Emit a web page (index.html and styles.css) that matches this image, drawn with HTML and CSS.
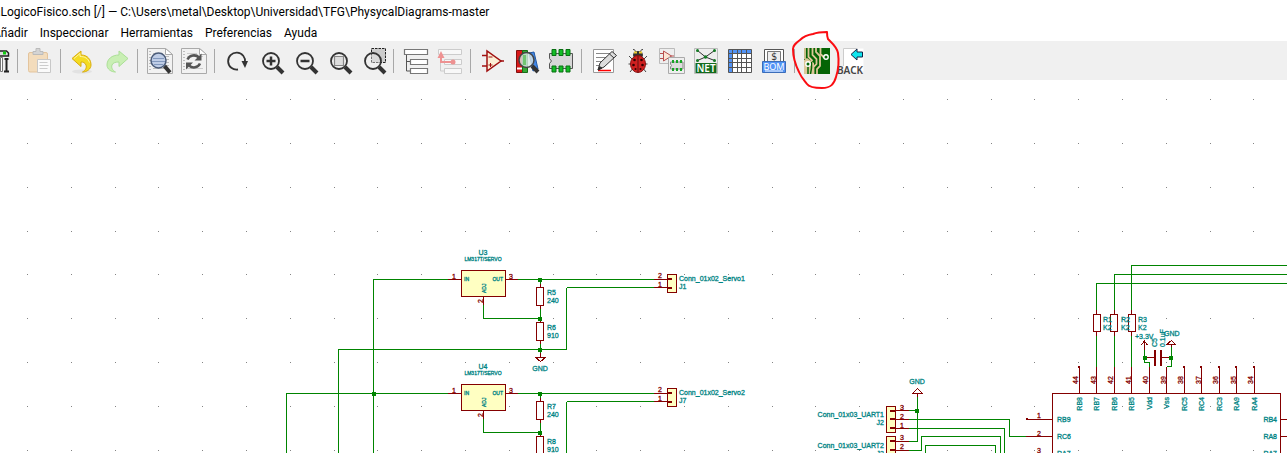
FILE: index.html
```html
<!DOCTYPE html>
<html lang="es">
<head>
<meta charset="utf-8">
<title>LogicoFisico.sch</title>
<link rel="stylesheet" href="styles.css">
</head>
<body>
<header class="titlebar">aLogicoFisico.sch [/] — C:\Users\metal\Desktop\Universidad\TFG\PhysycalDiagrams-master</header>
<nav class="menubar">
  <button class="menu">Añadir</button>
  <button class="menu">Inspeccionar</button>
  <button class="menu">Herramientas</button>
  <button class="menu">Preferencias</button>
  <button class="menu">Ayuda</button>
</nav>
<div class="toolbar" role="toolbar">
  <button class="tool" aria-label="Configurar"><svg class="icon" viewBox="0 0 26 26"><path d="M10 3h13.500l2 2v3H10z" fill="#ddd" stroke="#222" stroke-width="1.500"/><path d="M20 3.500h3v3h-3z" fill="#1c1"/><path d="M17.500 9.500h2v14h-2z" fill="#fff" stroke="#777"/><path d="M23.500 10v13M21.500 11h4M21 23.500h5" fill="none" stroke="#222" stroke-width="2"/></svg></button>
  <span class="sep"></span>
  <button class="tool" aria-label="Pegar"><svg class="icon" viewBox="0 0 26 26"><rect x="2.500" y="4.500" width="19" height="19.500" rx="1.500" fill="#f3dcbc" stroke="#e3c49d"/><path d="M7 6.500V3.500h3V.5h4v3h3v3z" fill="#d4d4d4" stroke="#bbb"/><path d="M11.500 11.500h13v13h-13z" fill="#fafafa" stroke="#c8c8c8"/><path d="M13.500 14.500h8M13.500 17.500h9M13.500 20.500h8" stroke="#ccc"/></svg></button>
  <span class="sep"></span>
  <button class="tool" aria-label="Deshacer"><svg class="icon" viewBox="0 0 26 26"><ellipse cx="13" cy="23.500" rx="10" ry="2" fill="#e2e2e2"/><path d="M3 10.500 12 3v4c7 0 10 5 10 10 0 4-4 7-8.500 7 3-1.500 4.500-4.500 3.500-7-1-2.500-3-3-5-3v4.500z" fill="#f4dc22" stroke="#d9ac10"/><path d="m5 10.500 6-5v3c5 0 8 2 9.500 6" fill="none" stroke="#fff3a0"/></svg></button>
  <button class="tool" aria-label="Rehacer"><svg class="icon" viewBox="0 0 26 26"><path d="M25 10.500 16 3v4C9 7 4 11 4 17c0 4 4 7 8.500 7-3-1.500-4.500-4.500-3.500-7 1-2.500 4-3 7-3v4.500z" fill="#c9efb4" stroke="#abdf96"/></svg></button>
  <span class="sep"></span>
  <button class="tool" aria-label="Vista previa"><svg class="icon" viewBox="0 0 26 26"><path d="M1.500.5h18l7 6v19h-25z" fill="#f2f2f2" stroke="#aaa"/><path d="M19.500.5v6h7z" fill="#fff" stroke="#aaa"/><path d="M4 3v21" stroke="#888" stroke-dasharray="1 2"/><path d="M7 5.500h10M7 8.500h16M7 11.500h16M7 14.500h16M7 17.500h16M7 20.500h16" stroke="#bbb"/><path d="m18.500 18 5.500 6.500" stroke="#333" stroke-width="4"/><circle cx="12.500" cy="12.500" r="7.500" fill="#bfcde6" stroke="#4a5b78" stroke-width="1.500"/><path d="M7 10.500h11M6 13.500h13M8 16.500h9" stroke="#8298bd"/></svg></button>
  <button class="tool" aria-label="Actualizar"><svg class="icon" viewBox="0 0 26 26"><path d="M1.500.5h18l7 6v19h-25z" fill="#f2f2f2" stroke="#aaa"/><path d="M19.500.5v6h7z" fill="#fff" stroke="#aaa"/><path d="M4 3v21" stroke="#888" stroke-dasharray="1 2"/><path d="M7 5.500h10M7 8.500h16M7 20.500h16" stroke="#ccc"/><path d="M7.500 11.500C9.500 7 15.500 6 19 9.500M20 15.500C18 20 12.500 20.500 9 17.500" fill="none" stroke="#555" stroke-width="2.500"/><path d="M21.500 5.500v7h-7zM6 21.500v-7h7z" fill="#555"/></svg></button>
  <span class="sep"></span>
  <button class="tool" aria-label="Redibujar"><svg class="icon" viewBox="0 0 26 26"><path d="M15 21.500a8.500 8.500 0 1 1 7-7" fill="none" stroke="#333" stroke-width="1.800"/><path d="M18.500 13H25l-3 7z" fill="#333"/></svg></button>
  <button class="tool" aria-label="Acercar"><svg class="icon" viewBox="0 0 26 26"><circle cx="14" cy="13" r="8" class="lens"/><path d="m20 19 6 6" class="grip"/><path d="M9.500 13h9M14 8.500v9" stroke="#333" stroke-width="2.500"/></svg></button>
  <button class="tool" aria-label="Alejar"><svg class="icon" viewBox="0 0 26 26"><circle cx="14" cy="13" r="8" class="lens"/><path d="m20 19 6 6" class="grip"/><path d="M9.500 13h9" stroke="#333" stroke-width="2.500"/></svg></button>
  <button class="tool" aria-label="Ajustar"><svg class="icon" viewBox="0 0 26 26"><circle cx="14" cy="13" r="8" class="lens"/><path d="m20 19 6 6" class="grip"/><path d="M9.500 8.500h9v9h-9z" fill="#ddd" stroke="#888" stroke-width="1.200"/></svg></button>
  <button class="tool" aria-label="Zoom a selección"><svg class="icon" viewBox="0 0 26 26"><path d="M12.500.5h14v14h-14z" fill="#ccc" stroke="#222" stroke-dasharray="2.500 1"/><circle cx="14" cy="13" r="8" class="lens"/><path d="m20 19 6 6" class="grip"/></svg></button>
  <span class="sep"></span>
  <button class="tool" aria-label="Jerarquía"><svg class="icon" viewBox="0 0 26 26"><path d="M4.500 7v16H9M4.500 13.500H9" fill="none" stroke="#555"/><path d="M2.500 1.500h23v5h-23zM8.500 11.500h17v5h-17zM8.500 20.500h17v5h-17z" fill="#fff" stroke="#777" stroke-width="1.200"/></svg></button>
  <button class="tool" aria-label="Salir de la hoja"><svg class="icon" viewBox="0 0 26 26"><path d="M4.500 7v16H9" fill="none" stroke="#ccc"/><path d="M2.500 1.500h23v5h-23zM8.500 11.500h17v5h-17zM8.500 20.500h17v5h-17z" fill="#f8f8f8" stroke="#ccc"/><path d="M17 14H5V8" fill="none" stroke="#ee9292" stroke-width="2"/><path d="m5 3 3.500 7h-7z" fill="#ee9292"/><circle cx="17" cy="14" r="2.500" fill="#ee9292"/></svg></button>
  <span class="sep"></span>
  <button class="tool" aria-label="Editor de símbolos"><svg class="icon" viewBox="0 0 26 26"><path d="M3 7.500h5M3 18h5M22 13h3" stroke="#a01010" stroke-width="1.500"/><path d="M8 3v20l14-10z" fill="#fbeed5" stroke="#a01010" stroke-width="1.500"/><path d="M9.500 9h4M9.500 17h4M11.500 15v4" stroke="#a01010"/></svg></button>
  <button class="tool" aria-label="Bibliotecas"><svg class="icon" viewBox="0 0 26 26"><path d="M3.500 2.500h6v22h-6z" fill="#d81818" stroke="#801010"/><path d="M4 20.500h5" stroke="#fff" stroke-width="2"/><path d="M9.500 2.500h5v22h-5z" fill="#35a835" stroke="#176d17"/><path d="m16 5 5-1 4 17-5 2z" fill="#4187e6" stroke="#2058a5"/><circle cx="13.500" cy="12" r="7.500" fill="#dce9e8" fill-opacity=".8" stroke="#444" stroke-width="1.500"/><path d="M11.500 7v10" stroke="#72c572" stroke-width="3"/><path d="m19 18 6 6" class="grip"/></svg></button>
  <button class="tool" aria-label="Editor de huellas"><svg class="icon" viewBox="0 0 26 26"><path d="M2.500 5.500h23v15h-23v-5l2-2.500-2-2.500z" fill="#d7d7d7" stroke="#555"/><path d="M5 1.500h4v6H5zM12 1.500h4v6h-4zM19 1.500h4v6h-4zM5 18h4v6H5zM12 18h4v6h-4zM19 18h4v6h-4z" fill="#12bd25" stroke="#086f12"/></svg></button>
  <span class="sep"></span>
  <button class="tool" aria-label="Anotar"><svg class="icon" viewBox="0 0 26 26"><path d="M3.500 1.500h20v23h-20z" fill="#fff" stroke="#999"/><path d="M6 5.500h15M6 9.500h12M6 13.500h9M6 17.500h5" stroke="#888"/><path d="M8 22.500h13" stroke="#f00" stroke-width="1.500"/><path d="m8 22 2-7L22 3.500l4.500 4L14 19z" fill="#ddd" stroke="#333"/><path d="m8 22 1.500-3.500L12 20zM19.500 6l4.500 4" fill="#222" stroke="#333"/></svg></button>
  <button class="tool" aria-label="Comprobar reglas"><svg class="icon" viewBox="0 0 26 26"><path d="M9 1.500c2 0 2.500 1 2.500 3M19 1.500c-2 0-2.500 1-2.500 3M5 8l4 4M23 8l-4 4M4.500 16h19M6 24l4-5M22 24l-4-5" fill="none" stroke="#444"/><ellipse cx="14" cy="7" rx="5" ry="4" fill="#333"/><path d="M10 4.500h3M15 4.500h3" stroke="#eecb35" stroke-width="2"/><ellipse cx="14" cy="16" rx="7.500" ry="8.500" fill="#d02020" stroke="#811"/><path d="M14 8v16.500" stroke="#611"/><g fill="#300"><circle cx="10.500" cy="12" r="1.300"/><circle cx="17.500" cy="12" r="1.300"/><circle cx="9.500" cy="17" r="1.300"/><circle cx="18.500" cy="17" r="1.300"/><circle cx="11.500" cy="21" r="1"/><circle cx="16.500" cy="21" r="1"/></g></svg></button>
  <button class="tool" aria-label="Asignar huellas"><svg class="icon" viewBox="0 0 26 26"><path d="M1.500.5h15v15h-15z" fill="#eee" stroke="#bbb"/><path d="M5.500 3v10l8-5zM2 5.500h3M2 10.500h3M13 8h3" fill="#fbe5d5" stroke="#b85050"/><path d="M10.500 9.500h16v16h-16z" fill="#eee" stroke="#aaa"/><path d="M12.500 14h12.500v7H12.500v-2l1-1.500-1-1.500z" fill="#ddd" stroke="#888"/><path d="M14 12h2v3h-2zM18 12h2v3h-2zM22 12h2v3h-2zM14 20h2v3h-2zM18 20h2v3h-2zM22 20h2v3h-2z" fill="#18a326"/></svg></button>
  <button class="tool" aria-label="Generar netlist"><svg class="icon" viewBox="0 0 26 26"><path d="M2.500.5h23v25h-23z" fill="#eee" stroke="#bbb"/><path d="m5.500 2.500 8 6.500 9-6.500M5.500 12.500l8-3.500 9 3.500" fill="none" stroke="#333"/><g fill="#147a24"><circle cx="5.500" cy="2.500" r="1.500"/><circle cx="22.500" cy="2.500" r="1.500"/><circle cx="13.500" cy="9" r="1.800"/><circle cx="5.500" cy="12.500" r="1.500"/><circle cx="22.500" cy="12.500" r="1.500"/></g><path d="M3.500 15h21v10h-21z" fill="#116b1c"/><text x="14" y="23.500" class="net-label">NET</text></svg></button>
  <button class="tool" aria-label="Tabla de campos"><svg class="icon" viewBox="0 0 26 26"><path d="M2.500 1.500h23v23h-23z" fill="#fff"/><path d="M2.500 1.500h23v4h-23zM2.500 1.500h4v23h-4z" fill="#5293f5"/><path d="M2.500 1.500h23v23h-23zM6.500 1.500v23M11.500 1.500v23M15.500 1.500v23M20.500 1.500v23M2.500 5.500h23M2.500 10.500h23M2.500 14.500h23M2.500 19.500h23" fill="none" stroke="#555"/></svg></button>
  <button class="tool" aria-label="Lista de materiales"><svg class="icon" viewBox="0 0 26 26"><path d="M4.500 1.500h19v13h-19z" fill="#fff" stroke="#555"/><path d="M7.500 3.500h13v10h-13z" fill="#eee" stroke="#777"/><text x="14" y="12" class="dollar">$</text><path d="M2.500 13.500h23v11h-23z" fill="#5293f5" stroke="#3b6db9"/><text x="14" y="22" class="bom-label">BOM</text><path d="M5 23h18" stroke="#fff"/></svg></button>
  <span class="sep"></span>
  <button class="tool pcb" aria-label="Editor de placas"><svg class="icon" viewBox="0 0 26 26"><path d="M1 0h26v26H1z" fill="#056405"/><path d="M1 12l3-2 7 5v11H1z" fill="#dec79a"/><g fill="none" stroke="#dec79a" stroke-width="1.800"><path d="M2 0v11M5.500 0v9l4 4M9.500 0v7l4 4v5l-3 3v7M13 0v4l4 4v10l-3 3v5M17.500 0v6l3 3h2"/></g><path d="M5 18v8M8.500 14v6l-1 6" fill="none" stroke="#056405" stroke-width="1.500"/><circle cx="23" cy="9" r="2.200" fill="#056405" stroke="#fff" stroke-width="1.400"/><circle cx="5" cy="16" r="2.200" fill="#056405" stroke="#fff" stroke-width="1.400"/></svg><svg class="scribble" viewBox="0 0 50 62"><path d="M36 3C31 3 27 3 22 5 16 6 12 8 9 11 5 14 2 16 2 20 2 30 5 37 8 43c2 5 5 8 8 12 2 3 9 4 15 4 9 0 12-4 14-11 3-9 3-17 2-24-1-6-6-10-10-14-1-2-1-4-1-7z"/></svg></button>
  <button class="tool" aria-label="Back"><svg class="icon" viewBox="0 0 26 26"><path d="M6.500.5h20v23h-20z" fill="#fff"/><path d="M6.500 18V.5h14" fill="none" stroke="#ccc"/><path d="m14 6.500 6-5.500v3h5.500v5H20v3z" fill="#0ee5ee" stroke="#124"/><text x="13" y="26" class="back-label">BACK</text></svg></button>
</div>
<main class="sheet">
<svg class="schematic" role="img" aria-label="Esquema">
<defs>
  <g id="regulator">
    <path class="wire" d="M518 279.500h136M483.500 305v13.500h57M540.500 279v5M540.500 309v10M540.500 344v9M654 287.500h-87.500"/>
    <path class="pin" d="M448 279.500h13M506 279.500h12M483.500 297v8M540.500 284v3M540.500 306v3M540.500 319v3M540.500 341v3M654 279.500h14M654 287.500h14"/>
    <path class="body" d="M461.500 270.500h44v26h-44zM667.500 274.500h9v18h-9z"/>
    <path class="part" d="M536.500 287.500h7v18h-7zM536.500 322.500h7v18h-7z"/>
    <path class="tab" d="M667 279h5M667 288h5"/>
    <path class="dot" d="M538 279.500h4M538 318.500h4"/>
  </g>
</defs>
<g transform="translate(0 -80)">
  <path class="grid" d="M27 99.500H1400M27 143.500H1400M27 187.500H1400M27 231.500H1400M27 274.500H1400M27 318.500H1400M27 362.500H1400M27 406.500H1400M27 450.500H1400"/>
  <path class="wire" d="M448 279.500h-74.500V600M566.500 287.500v62h-228V600M448 393.500H286.500V600M566.500 401.500V600"/>
  <use href="#regulator"/>
  <use href="#regulator" y="114"/>
  <path class="pin" d="M540.500 353v4M535.500 357.500h10l-5 4z"/>
  <path class="dot" d="M538 349.500h4M372 393.500h4"/>

  <text class="mid" x="483" y="255">U3</text><text class="value" x="483" y="261">LM317T/SERVO</text>
  <text class="name" x="464" y="281">IN</text><text class="name end" x="503" y="281">OUT</text>
  <text class="name turn" transform="translate(486 293) rotate(-90)">ADJ</text>
  <text class="num" x="454" y="279">1</text><text class="num" x="511" y="279">3</text><text class="num" transform="translate(483 301) rotate(-90)">2</text>
  <text x="547" y="295">R5</text><text x="547" y="303">240</text><text x="547" y="330">R6</text><text x="547" y="338">910</text>
  <text class="mid" x="540" y="371">GND</text>
  <text class="num" x="660" y="278">2</text><text class="num" x="660" y="287">1</text>
  <text x="679" y="281">Conn_01x02_Servo1</text><text x="679" y="289">J1</text>

  <text class="mid" x="483" y="369">U4</text><text class="value" x="483" y="375">LM317T/SERVO</text>
  <text class="name" x="464" y="395">IN</text><text class="name end" x="503" y="395">OUT</text>
  <text class="name turn" transform="translate(486 407) rotate(-90)">ADJ</text>
  <text class="num" x="454" y="393">1</text><text class="num" x="511" y="393">3</text><text class="num" transform="translate(483 415) rotate(-90)">2</text>
  <text x="547" y="409">R7</text><text x="547" y="417">240</text><text x="547" y="444">R8</text><text x="547" y="452">910</text>
  <text class="num" x="660" y="392">2</text><text class="num" x="660" y="401">1</text>
  <text x="679" y="395">Conn_01x02_Servo2</text><text x="679" y="403">J7</text>

  <path class="wire" d="M917.500 397v44.500H909M909 410.500h8M909 419.500h100.500v17h17M909 428.500h95.500V600M909 450.500h12.500v-14h79V600M925.500 600V445.500h70V600"/>
  <path class="body" d="M886.500 406.500h9v26h-9zM886.500 436.500h9v60h-9z"/>
  <path class="pin" d="M891 410.500h18M891 419.500h18M891 428.500h18M891 441.500h18M891 450.500h18M917.500 393v4M912.500 393.500h10l-5-5z"/>
  <path class="tab" d="M890 411h5M890 419h5M890 428h5M890 441h5M890 450h5"/>
  <path class="dot" d="M915 410.500h4"/>
  <text class="mid" x="917" y="384">GND</text>
  <text class="end" x="884" y="417">Conn_01x03_UART1</text><text class="end" x="884" y="425">J2</text>
  <text class="end" x="884" y="448">Conn_01x03_UART2</text><text class="end" x="884" y="456">J3</text>
  <text class="num" x="902" y="410">3</text><text class="num" x="902" y="419">2</text><text class="num" x="902" y="428">1</text><text class="num" x="902" y="440">3</text><text class="num" x="902" y="449">2</text>

  <path class="wire" d="M1096.500 367v-83.500H1600M1114.500 367v-92.500H1600M1131.500 367V265.500H1600M1144.500 350v12.500h5v5M1171.500 347v19.500h-5"/>
  <path class="pin" d="M1096.500 310v26M1114.500 310v26M1131.500 310v26M1079.500 393v-27M1096.500 393v-26M1114.500 393v-26M1131.500 393v-26M1149.500 393v-26M1166.500 393v-26M1184.500 393v-27M1201.500 393v-27M1219.500 393v-27M1236.500 393v-27M1254.500 393v-27M1026 419.500h26M1026 436.500h26M1026 454.500h26M1281 419.500h26M1281 436.500h26M1281 454.500h26M1145 357.500h9M1162 357.500h9M1144.500 350v-9m-3 4 3-4 3 4M1171.500 347v-3M1166.500 344.500h9l-4-4z"/>
  <path class="tab" d="M1155 350v16M1161 350v16M1078 367h2M1183 367h2M1200 367h2M1218 367h2M1235 367h2M1253 367h2M1026 419h2"/>
  <path class="part" d="M1093.500 314.500h7v17h-7zM1110.500 314.500h7v17h-7zM1128.500 314.500h7v17h-7z"/>
  <path class="pin" d="M1052.500 600V393.500h228V600"/>
  <path class="dot" d="M1143 357.500h4M1169 357.500h4"/>
  <text x="1103" y="322">R1</text><text x="1103" y="330">K2</text><text x="1121" y="322">R2</text><text x="1121" y="330">K2</text><text x="1138" y="322">R3</text><text x="1138" y="330">K2</text>
  <text x="1135" y="339">+3.3V</text><text x="1164" y="336">GND</text>
  <text transform="translate(1157 347) rotate(-90)">C5</text><text transform="translate(1165 347) rotate(-90)">0.1uF</text>
  <g class="pin-numbers">
    <text transform="translate(1078 380) rotate(-90)">44</text><text transform="translate(1096 380) rotate(-90)">43</text><text transform="translate(1113 380) rotate(-90)">42</text><text transform="translate(1131 380) rotate(-90)">41</text><text transform="translate(1148 380) rotate(-90)">40</text><text transform="translate(1166 380) rotate(-90)">39</text><text transform="translate(1183 380) rotate(-90)">38</text><text transform="translate(1201 380) rotate(-90)">37</text><text transform="translate(1218 380) rotate(-90)">36</text><text transform="translate(1236 380) rotate(-90)">35</text><text transform="translate(1253 380) rotate(-90)">34</text>
    <text x="1039" y="418">1</text><text x="1039" y="436">2</text><text x="1039" y="453">3</text>
  </g>
  <g class="pin-names">
    <text transform="translate(1082 397) rotate(-90)">RB8</text><text transform="translate(1099 397) rotate(-90)">RB7</text><text transform="translate(1117 397) rotate(-90)">RB6</text><text transform="translate(1134 397) rotate(-90)">RB5</text><text transform="translate(1152 397) rotate(-90)">Vdd</text><text transform="translate(1169 397) rotate(-90)">Vss</text><text transform="translate(1187 397) rotate(-90)">RC5</text><text transform="translate(1204 397) rotate(-90)">RC4</text><text transform="translate(1222 397) rotate(-90)">RC3</text><text transform="translate(1239 397) rotate(-90)">RA9</text><text transform="translate(1257 397) rotate(-90)">RA4</text>
    <text x="1277" y="422">RB4</text><text x="1277" y="439">RA8</text><text x="1277" y="456">RA7</text>
  </g>
  <text x="1057" y="422">RB9</text><text x="1057" y="439">RC6</text><text x="1057" y="456">RA7</text>
</g>
</svg>
</main>
</body>
</html>
```
FILE: styles.css
```css
* { box-sizing: border-box; }
body {
  margin: 0;
  height: 100vh;
  display: flex;
  flex-direction: column;
  overflow: hidden;
  background: #fff;
  color: #000;
  font-family: Roboto, "Open Sans", sans-serif;
  font-size: 12px;
}
.titlebar {
  margin-left: -6px;
  height: 24px;
  line-height: 24px;
  white-space: nowrap;
}
.menubar {
  display: flex;
  height: 17px;
  margin-left: -13px;
}
.menu {
  border: 0;
  padding: 1px 6px 0;
  background: none;
  color: inherit;
  font: inherit;
  line-height: 16px;
}
.toolbar {
  display: flex;
  align-items: center;
  height: 39px;
  margin-left: -21px;
  background: #f0f0f0;
}
.tool {
  position: relative;
  flex: none;
  width: 34px;
  height: 34px;
  padding: 4px;
  border: 0;
  background: none;
}
.icon {
  display: block;
  width: 26px;
  height: 26px;
  overflow: visible;
}
.sep {
  flex: none;
  width: 9px;
  height: 24px;
  background: linear-gradient(#a8a8a8, #a8a8a8) center / 1px 100% no-repeat;
}
.lens { fill: #efefef; fill-opacity: .4; stroke: #333; stroke-width: 1.8; }
.grip { fill: none; stroke: #333; stroke-width: 4; }
.icon text { font-family: "Noto Sans", sans-serif; text-anchor: middle; }
.icon .net-label { font-size: 10px; font-weight: 600; fill: #fff; }
.icon .bom-label { font-size: 9px; fill: #fff; }
.icon .dollar { font-family: "DejaVu Sans Mono", monospace; font-size: 10px; fill: #333; }
.icon .back-label { font-size: 10px; font-weight: 600; fill: #444; }
.scribble {
  position: absolute;
  z-index: 1;
  left: -8px;
  top: -15px;
  width: 50px;
  height: 62px;
  overflow: visible;
  pointer-events: none;
}
.scribble path {
  fill: none;
  stroke: #fb0d12;
  stroke-width: 2;
  stroke-linejoin: round;
}
.sheet {
  flex: 1;
  min-height: 0;
  overflow: hidden;
}
.schematic {
  display: block;
  width: 100%;
  height: 100%;
  font-family: "Liberation Sans", Arial, sans-serif;
  font-size: 7px;
}
.schematic path { shape-rendering: crispEdges; fill: none; }
.schematic text { fill: #008484; stroke: #008484; stroke-width: .3; }
.schematic .grid { stroke: #848484; stroke-dasharray: 1 42.8; }
.schematic .wire { stroke: #008400; }
.schematic .pin { stroke: #840000; }
.schematic .body { stroke: #840000; fill: #ffffc2; }
.schematic .part { stroke: #840000; fill: #fff; }
.schematic .tab { stroke: #840000; stroke-width: 2; }
.schematic .dot { stroke: #008400; stroke-width: 4; }
.schematic .mid { text-anchor: middle; }
.schematic .end { text-anchor: end; }
.schematic .value { text-anchor: middle; font-size: 5px; }
.schematic .name { font-size: 5px; }
.schematic .num,
.schematic .pin-numbers text { fill: #840000; stroke: #840000; text-anchor: middle; }
.schematic .pin-names text { text-anchor: end; }
```
